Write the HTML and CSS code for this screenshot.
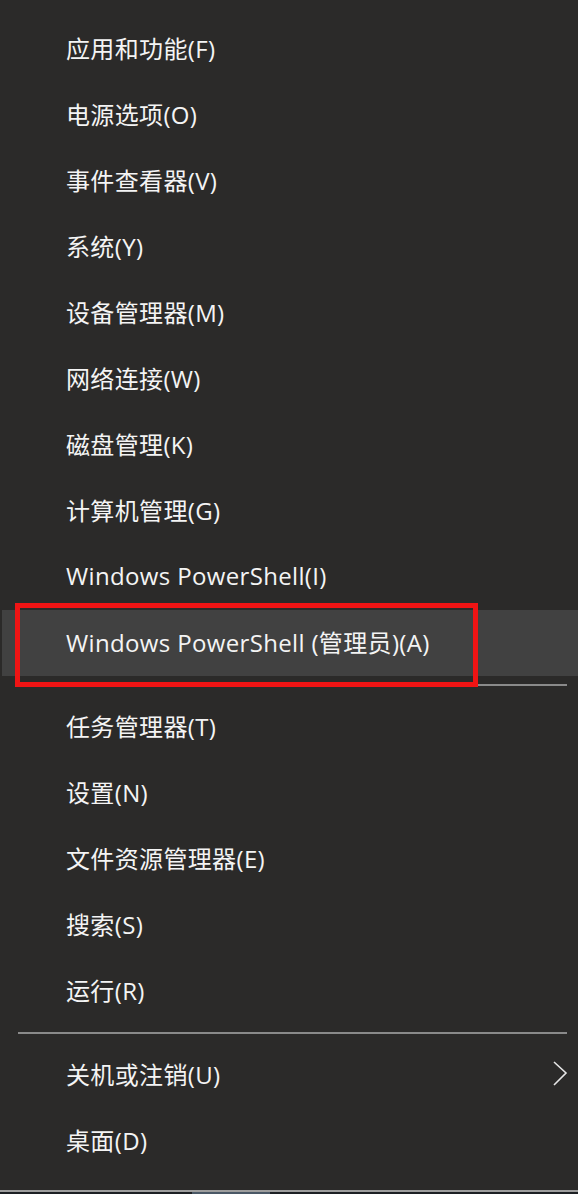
FILE: index.html
```html
<!DOCTYPE html>
<html lang="zh-CN">
<head>
<meta charset="utf-8">
<title>Win+X 菜单</title>
<link rel="stylesheet" href="styles.css">
</head>
<body>
<div class="menu">
  <div class="item">应用和功能(F)</div>
  <div class="item">电源选项(O)</div>
  <div class="item">事件查看器(V)</div>
  <div class="item">系统(Y)</div>
  <div class="item">设备管理器(M)</div>
  <div class="item">网络连接(W)</div>
  <div class="item">磁盘管理(K)</div>
  <div class="item">计算机管理(G)</div>
  <div class="item">Windows PowerShell(I)</div>
  <div class="item active">Windows PowerShell (管理员)(A)<span class="mark"></span></div>
  <div class="sep"></div>
  <div class="item">任务管理器(T)</div>
  <div class="item">设置(N)</div>
  <div class="item">文件资源管理器(E)</div>
  <div class="item">搜索(S)</div>
  <div class="item">运行(R)</div>
  <div class="sep"></div>
  <div class="item sub"><span>关机或注销(U)</span>
    <svg class="chev" width="16" height="28" viewBox="0 0 16 28"><polyline points="2,2 14,13 2,25" fill="none" stroke="#e6e6e6" stroke-width="1.6"/></svg>
  </div>
  <div class="item">桌面(D)</div>
</div>
<div class="taskbar"><span class="tb-seg"></span></div>
</body>
</html>
```
FILE: styles.css
```css
html, body {
  margin: 0;
  padding: 0;
  background: #2b2a29;
}
body {
  width: 578px;
  height: 1194px;
  overflow: hidden;
  font-family: "Open Sans", "Noto Sans CJK SC", sans-serif;
  color: #f4f4f4;
}
.menu {
  padding-top: 16px;
  padding-bottom: 16px;
}
.item {
  position: relative;
  height: 66px;
  box-sizing: border-box;
  margin-left: 2px;
  padding-left: 64px;
  padding-bottom: 3px;
  display: flex;
  align-items: center;
  font-size: 24px;
  letter-spacing: 0.35px;
  white-space: nowrap;
}
.item.active {
  background: #414141;
}
.mark {
  position: absolute;
  left: 13px;
  top: -7px;
  width: 453px;
  height: 74px;
  border: 5px solid #f01414;
  pointer-events: none;
}
.sep {
  height: 2px;
  margin: 8px 11px 8px 18px;
  background: #8a8a8a;
}
.sub {
  justify-content: space-between;
  padding-right: 10px;
}
.chev {
  display: block;
  margin-top: 0;
}
.taskbar {
  height: 4px;
  border-top: 2px solid #9e9e9e;
  background: #1d2024;
  box-sizing: border-box;
  position: relative;
}
.tb-seg {
  position: absolute;
  left: 192px;
  width: 78px;
  top: 0;
  height: 2px;
  background: #4a5866;
}
```
